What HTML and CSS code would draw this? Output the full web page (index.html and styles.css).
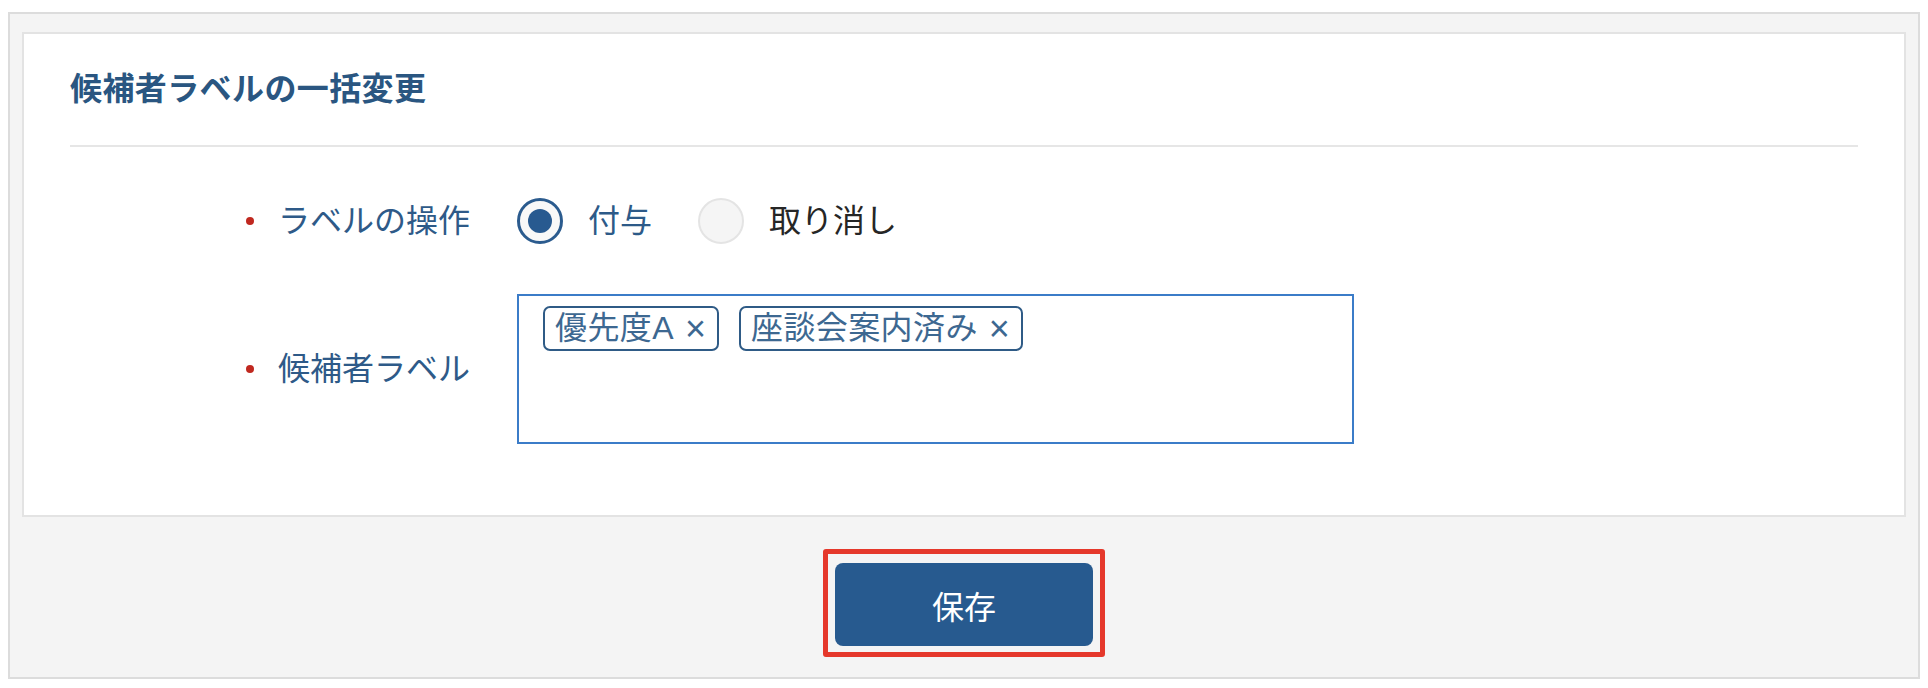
FILE: index.html
```html
<!DOCTYPE html>
<html lang="ja">
<head>
<meta charset="utf-8">
<title>候補者ラベルの一括変更</title>
<link rel="stylesheet" href="styles.css">
</head>
<body>
<div class="frame">
  <section class="card">
    <header class="card-header">
      <h1 class="card-title">候補者ラベルの一括変更</h1>
    </header>
    <div class="form">
      <div class="form-row">
        <div class="form-label"><span class="req-dot"></span><span class="label-text">ラベルの操作</span></div>
        <div class="radio-group">
          <label class="radio checked"><span class="radio-circle"><span class="radio-dot"></span></span><span class="radio-text">付与</span></label>
          <label class="radio"><span class="radio-circle"></span><span class="radio-text">取り消し</span></label>
        </div>
      </div>
      <div class="form-row row-tags">
        <div class="form-label"><span class="req-dot"></span><span class="label-text">候補者ラベル</span></div>
        <div class="tag-box">
          <span class="tag">優先度A<span class="tag-x">×</span></span>
          <span class="tag">座談会案内済み<span class="tag-x">×</span></span>
        </div>
      </div>
    </div>
  </section>
  <footer class="footer">
    <div class="highlight">
      <button class="btn-save" type="button">保存</button>
    </div>
  </footer>
</div>
</body>
</html>
```

FILE: styles.css
```css
* { box-sizing: border-box; }
html, body { margin: 0; padding: 0; background: #fff; }
body {
  font-family: "Liberation Sans", "Noto Sans CJK JP", sans-serif;
  font-size: 32px;
  color: #2d5987;
}
.frame {
  margin: 12px 0 0 8px;
  width: 1912px;
  height: 667px;
  border: 2px solid #dcdcdc;
  background: #f4f4f4;
  padding: 18px 12px 0 12px;
}
.card {
  background: #fff;
  border: 2px solid #e3e3e3;
  padding: 0 46px;
  height: 485px;
}
.card-header {
  padding: 31px 0 32px;
  border-bottom: 2px solid #e6e6e6;
}
.card-title {
  margin: 0;
  font-size: 32px;
  line-height: 48px;
  font-weight: 700;
  letter-spacing: 0.4px;
  color: #2a5681;
}
.form {
  padding: 51px 0 0 176px;
}
.form-row {
  display: flex;
  align-items: center;
}
.row-tags { margin-top: 50px; }
.form-label {
  width: 271px;
  display: flex;
  align-items: center;
}
.req-dot {
  width: 8px;
  height: 8px;
  border-radius: 50%;
  background: #c0281f;
  margin-right: 24px;
}
.label-text {
  line-height: 46px;
  color: #2e5a88;
}
.radio-group {
  display: flex;
  align-items: center;
}
.radio {
  display: flex;
  align-items: center;
}
.radio + .radio { margin-left: 46px; }
.radio-circle {
  width: 46px;
  height: 46px;
  border-radius: 50%;
  border: 2px solid #e4e4e4;
  background: #f5f5f5;
  display: flex;
  align-items: center;
  justify-content: center;
}
.radio.checked .radio-circle {
  border: 3px solid #2b5b8e;
  background: #f8f8f8;
}
.radio-dot {
  width: 24px;
  height: 24px;
  border-radius: 50%;
  background: #285a90;
}
.radio-text {
  margin-left: 25px;
  line-height: 46px;
  color: #262626;
}
.radio.checked .radio-text { color: #2d5a88; }
.tag-box {
  width: 837px;
  height: 150px;
  border: 2px solid #3b7cc8;
  padding: 10px 0 0 24px;
  display: flex;
  align-items: flex-start;
  gap: 20px;
}
.tag {
  display: inline-flex;
  align-items: center;
  height: 45px;
  border: 2px solid #2f5b86;
  border-radius: 7px;
  padding: 0 11px 0 10px;
  line-height: 41px;
  letter-spacing: 0.4px;
  color: #3d6891;
}
.tag-x {
  margin-left: 11px;
  font-size: 36px;
  line-height: 41px;
  letter-spacing: 0;
}
.footer {
  display: flex;
  justify-content: center;
  padding-top: 32px;
}
.highlight {
  border: 5px solid #e5382b;
  border-radius: 3px;
  padding: 9px 7px 6px 7px;
}
.btn-save {
  display: block;
  width: 258px;
  height: 83px;
  border: none;
  border-radius: 8px;
  background: #275a8f;
  color: #fff;
  font-family: "Liberation Sans", "Noto Sans CJK JP", sans-serif;
  font-size: 32px;
  padding: 0;
}
```
